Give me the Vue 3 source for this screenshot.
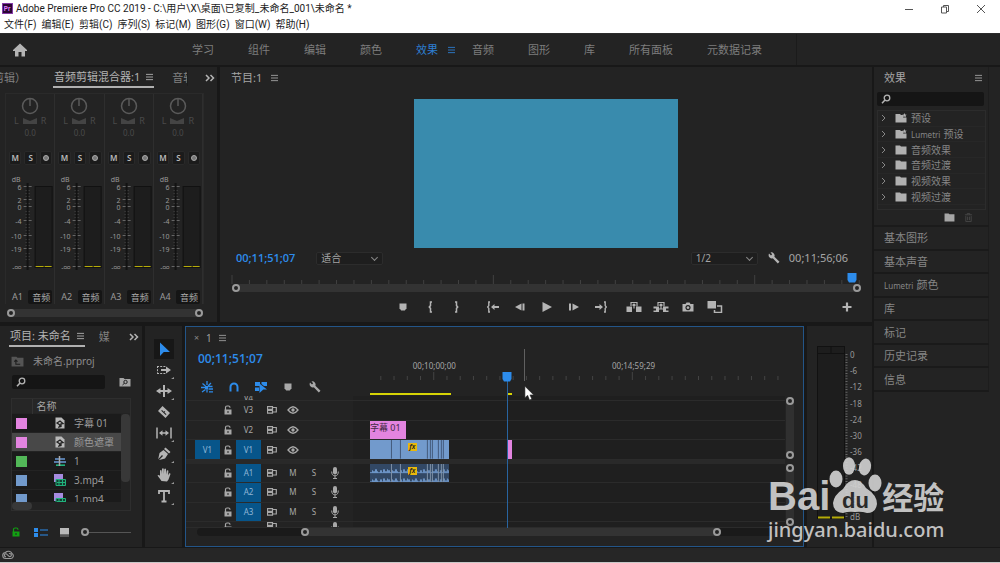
<script setup>
const menus = ['文件(F)', '编辑(E)', '剪辑(C)', '序列(S)', '标记(M)', '图形(G)', '窗口(W)', '帮助(H)']
const workspaces = ['学习', '组件', '编辑', '颜色', '效果', '音频', '图形', '库', '所有面板', '元数据记录']
const channels = ['A1', 'A2', 'A3', 'A4']
const dbMarks = [
  { t: '6', y: 13 }, { t: '2', y: 26 }, { t: '0', y: 33 }, { t: '-4', y: 47 },
  { t: '-10', y: 62 }, { t: '-19', y: 75 }, { t: '-∞', y: 93 },
]
const minorDb = [16, 19, 22, 29, 37, 40, 43, 50, 53, 56, 59, 65, 68, 71, 79, 82, 85]
const transport = [
  { id: 'marker', label: '添加标记' }, { id: 'in', label: '标记入点' }, { id: 'out', label: '标记出点' },
  { id: 'goin', label: '转到入点' }, { id: 'back', label: '后退一帧' }, { id: 'play', label: '播放' },
  { id: 'fwd', label: '前进一帧' }, { id: 'goout', label: '转到出点' }, { id: 'lift', label: '提升' },
  { id: 'extract', label: '提取' }, { id: 'camera', label: '导出帧' }, { id: 'compare', label: '比较视图' },
]
const effects = [
  { name: '预设', star: true }, { latin: 'Lumetri', name: '预设', star: true }, { name: '音频效果' },
  { name: '音频过渡' }, { name: '视频效果' }, { name: '视频过渡' },
]
const sidePanels = [
  { name: '基本图形' }, { name: '基本声音' }, { latin: 'Lumetri', name: '颜色' }, { name: '库' },
  { name: '标记' }, { name: '历史记录' }, { name: '信息' },
]
const files = [
  { name: '字幕 01', color: 'pink', icon: 'still' },
  { name: '颜色遮罩', color: 'pink', icon: 'still', selected: true },
  { name: '1', color: 'green', icon: 'seq' },
  { name: '3.mp4', color: 'blue', icon: 'clip' },
  { name: '1.mp4', color: 'blue', icon: 'clip' },
]
const tools = [
  { id: 'select', label: '选择工具' }, { id: 'trackfwd', label: '向前选择轨道工具' }, { id: 'ripple', label: '波纹编辑工具' },
  { id: 'razor', label: '剃刀工具' }, { id: 'slip', label: '外滑工具' }, { id: 'pen', label: '钢笔工具' },
  { id: 'hand', label: '手形工具' }, { id: 'type', label: '文字工具' },
]
const timelineTools = [
  { id: 'nest', on: true, label: '嵌套' }, { id: 'magnet', on: true, label: '对齐' },
  { id: 'linked', on: true, label: '链接选择项' }, { id: 'marker', label: '添加标记' }, { id: 'wrench', label: '时间轴显示设置' },
]
const videoTracks = ['V3', 'V2', 'V1']
const audioTracks = ['A1', 'A2', 'A3']
const cuts = [21, 30, 57, 60, 62, 68, 71, 73]
const wave = Array.from({ length: 79 }, (_, i) => 1 + ((i * 7 + (i * i) % 5) % 4))
const meterMarks = ['0', '-6', '-12', '-18', '-24', '-30', '-36', '-42', '-48', '-54', 'dB']
</script>

<template>
  <div class="app">
    <svg class="defs" aria-hidden="true">
      <symbol id="menu" viewBox="0 0 8 8"><path d="M0 1h8M0 4h8M0 7h8" stroke="currentColor" /></symbol>
      <symbol id="more" viewBox="0 0 10 8"><path d="M1 1l3 3-3 3M5.500 1l3 3-3 3" fill="none" stroke="currentColor" stroke-width="1.500" /></symbol>
      <symbol id="home" viewBox="0 0 16 14"><path d="M8 .5L1 7v1h2v5.500h3.500V9h3v4.500H13V8h2V7z" fill="currentColor" /></symbol>
      <symbol id="search" viewBox="0 0 10 10"><circle cx="6" cy="4" r="2.800" fill="none" stroke="currentColor" stroke-width="1.300" /><path d="M4 6L1 9.300" stroke="currentColor" stroke-width="1.500" /></symbol>
      <symbol id="folder" viewBox="0 0 12 10"><path d="M.5.5h4.500l1 1h5.500v8H.5z" fill="currentColor" /></symbol>
      <symbol id="upfolder" viewBox="0 0 12 10"><path d="M.5.5h4.500l1 1h5.500v8H.5z" fill="currentColor" /><path d="M4.500 4v3.500H8.500M3 5.200L4.500 3.700 6 5.200" fill="none" stroke="#1d1d1d" /></symbol>
      <symbol id="starfolder" viewBox="0 0 12 10"><path d="M.5 1h4.500l1 1h2v2.500h3.500v5H.5z" fill="currentColor" /><path d="M9.500 0l.7 1.500 1.600.2-1.200 1.100.3 1.600-1.400-.8-1.400.8.3-1.600L7.200 1.700l1.600-.2z" fill="currentColor" /></symbol>
      <symbol id="trash" viewBox="0 0 10 10"><path d="M1 2h8M3.500 2V.7h3V2M2 3.500V9.500h6v-6M4 4v4M6 4v4" fill="none" stroke="currentColor" /></symbol>
      <symbol id="wrench" viewBox="0 0 12 12"><path d="M1 1.500L3 3.500 4.200 2.300 2.500.5A3.200 3.200 0 0 1 6.400 4.700L11.500 9.700 9.800 11.400 4.800 6.300A3.200 3.200 0 0 1 .7 2.500z" fill="currentColor" /></symbol>
      <symbol id="marker" viewBox="0 0 12 12"><path d="M2.500 2.500h7v4.800L7.800 9.500H4.200L2.500 7.300z" fill="currentColor" /></symbol>
      <symbol id="in" viewBox="0 0 12 12"><path d="M8 1H6.500v3.600L5.300 6l1.200 1.400V11H8" fill="none" stroke="currentColor" stroke-width="1.500" /></symbol>
      <symbol id="out" viewBox="0 0 12 12"><path d="M4 1h1.500v3.600L6.700 6 5.500 7.400V11H4" fill="none" stroke="currentColor" stroke-width="1.500" /></symbol>
      <symbol id="goin" viewBox="0 0 12 12"><path d="M3 1H1.800v3.600L.7 6l1.100 1.400V11H3" fill="none" stroke="currentColor" stroke-width="1.400" /><path d="M4 6l3.500-3v2H12v2H7.500v2z" fill="currentColor" /></symbol>
      <symbol id="goout" viewBox="0 0 12 12"><path d="M9 1h1.200v3.600L11.300 6l-1.100 1.400V11H9" fill="none" stroke="currentColor" stroke-width="1.400" /><path d="M8 6L4.500 3v2H0v2h4.500v2z" fill="currentColor" /></symbol>
      <symbol id="back" viewBox="0 0 12 12"><path d="M1 6l6.500-3.500v7zM8.500 2.500h2v7h-2z" fill="currentColor" /></symbol>
      <symbol id="fwd" viewBox="0 0 12 12"><path d="M11 6L4.500 2.500v7zM1 2.500h2v7H1z" fill="currentColor" /></symbol>
      <symbol id="play" viewBox="0 0 12 12"><path d="M1.500 1v10L11 6z" fill="currentColor" /></symbol>
      <symbol id="lift" viewBox="0 0 16 12"><path d="M.5 5.500H6v5.500H.5zM10 5.500h5.500v5.500H10z" fill="currentColor" /><path d="M5 5V1.500h6V5.500M8 3v4.500M6.500 4.500L8 3l1.500 1.500" fill="none" stroke="currentColor" stroke-width="1.200" /></symbol>
      <symbol id="extract" viewBox="0 0 16 12"><path d="M.5 5.500H6v5.500H.5V9.500H3v-2H.5zM15.500 5.500H10v5.500h5.500V9.500H13v-2h2.500z" fill="currentColor" /><path d="M5 5V1.500h6V5.500M8 3v5M6.500 4.500L8 3l1.500 1.500M6 8h4" fill="none" stroke="currentColor" stroke-width="1.200" /></symbol>
      <symbol id="camera" viewBox="0 0 12 12"><path fill-rule="evenodd" d="M.5 3h3l1-1.500h3l1 1.500h3v7.500H.5zM6 4a2.600 2.600 0 1 0 .01 0zM6 5.200a1.400 1.400 0 1 1-.01 0z" fill="currentColor" /></symbol>
      <symbol id="compare" viewBox="0 0 16 12"><path d="M.5 0h8.500v7.500H.5z" fill="currentColor" /><path d="M10 5h4.500v6.500H7.500V9" fill="none" stroke="currentColor" stroke-width="1.500" /></symbol>
      <symbol id="plus" viewBox="0 0 10 10"><path d="M5 .5v9M.5 5h9" stroke="currentColor" stroke-width="2.200" /></symbol>
      <symbol id="lock" viewBox="0 0 8 10"><path d="M1.500 5V2.500Q1.500 1 3 1h1.500Q6 1 6 2.800" fill="none" stroke="currentColor" stroke-width="1.200" /><path fill-rule="evenodd" d="M.5 4.500h7V9.500h-7zM3.500 6v2h1V6z" fill="currentColor" /></symbol>
      <symbol id="sync" viewBox="0 0 10 8"><path d="M.5.600h5v2.700h-5zM.5 4.500h5v2.700h-5zM6 1.500h3.300V6H6" fill="none" stroke="currentColor" stroke-width="1.200" /></symbol>
      <symbol id="eye" viewBox="0 0 12 8"><path d="M1 4Q6-2.500 11 4 6 10.500 1 4z" fill="none" stroke="currentColor" stroke-width="1.300" /><circle cx="6" cy="4" r="1.700" fill="currentColor" /></symbol>
      <symbol id="mic" viewBox="0 0 8 12"><rect x="2" y="0" width="4" height="7.500" rx="2" fill="currentColor" /><path d="M.7 4.500Q.7 8.800 4 8.800T7.300 4.500M4 9v2.500M2 11.500h4" fill="none" stroke="currentColor" /></symbol>
      <symbol id="nest" viewBox="0 0 12 12"><path d="M6 0v4M1.500 2.500l3 2.500M10 2l-3 3M0 6.500h4M7 5.500h4.500M4.500 8.500L1 11M6 7v4.500M7.500 8h4.500M8 10.800h4" stroke="currentColor" stroke-width="1.300" /><path d="M4 5h3v3H4z" fill="currentColor" /></symbol>
      <symbol id="magnet" viewBox="0 0 12 12"><path d="M2.500 10.500V6a3.500 3.500 0 0 1 7 0v4.500" fill="none" stroke="currentColor" stroke-width="2" /></symbol>
      <symbol id="linked" viewBox="0 0 12 12"><path d="M0 1h5v4H0zM6.500 1H12v4H9L6.500 3zM0 6.500h4V10H0z" fill="currentColor" /><path d="M4.500 2.500L12 8.500H8.300L4.500 12z" fill="currentColor" /></symbol>
      <symbol id="select" viewBox="0 0 16 16"><path d="M4 1.500v13.500l3.800-4H14z" fill="currentColor" /></symbol>
      <symbol id="trackfwd" viewBox="0 0 16 16"><path d="M1 4.500h9M1 11.500h9M1.500 4v8" fill="none" stroke="currentColor" stroke-dasharray="2 1.200" /><path d="M5 7h5V4.500L15 8l-5 3.500V9H5z" fill="currentColor" /></symbol>
      <symbol id="ripple" viewBox="0 0 16 16"><path d="M7 2h2v12H7zM0 8l4.500-3v2H7v2H4.500v2zM16 8l-4.500-3v2H9v2h2.500v2z" fill="currentColor" /></symbol>
      <symbol id="razor" viewBox="0 0 16 16"><path fill-rule="evenodd" d="M6.500 2L14 9l-4.500 5L2 7zM6 6l-.8.800 4.500 4.200.8-.8-2-1.800.8-.8-.7-.7-.8.800z" fill="currentColor" /></symbol>
      <symbol id="slip" viewBox="0 0 16 16"><path d="M1 2.500v11M15 2.500v11" stroke="currentColor" stroke-width="1.500" /><path d="M3 8l3.500-2.700v2h3v-2L13 8l-3.500 2.700v-2h-3v2z" fill="currentColor" /></symbol>
      <symbol id="pen" viewBox="0 0 16 16"><path d="M9.500 1.500L14.500 6 13 7.500 8 3zM7.500 4L12 8 9 12.500 3 14 7 10 6 9 2.200 13.200 3.500 7z" fill="currentColor" /></symbol>
      <symbol id="hand" viewBox="0 0 16 16"><path d="M5.500 14L1.500 8.500q1-1.200 2.500.3V3.500q.8-1 1.600 0L6 7V1.800q.9-1 1.800 0V7l.5-5q.9-.9 1.700 0V7.500L10.800 3.500q1-.8 1.600.2L12 8.500l1.200-2.200q1.200-.3 1.300.7L12.500 12.500 11 14.500z" fill="currentColor" /></symbol>
      <symbol id="type" viewBox="0 0 16 16"><path d="M3 6V3h10v3M8 3v10.500M5.500 13.500h5" fill="none" stroke="currentColor" stroke-width="1.800" /></symbol>
      <symbol id="still" viewBox="0 0 12 12"><path d="M1.500.5h6L10.500 3.500v8h-9z" fill="#b9b9b9" /><path d="M3 6l3-2 3 2.500-2 .3v2.700L5 10l1-2z" fill="none" stroke="#222" stroke-width="1.300" /></symbol>
      <symbol id="seq" viewBox="0 0 12 12"><path d="M1 4h10M0 7h12" stroke="#6b9bd8" stroke-width="1.600" /><path d="M2 10.200h9" stroke="#20b27c" stroke-width="1.600" /><path d="M5.500 1v10" stroke="#aaa" stroke-width="1.500" /></symbol>
      <symbol id="clip" viewBox="0 0 12 12"><path d="M0 0h9v8H0z" fill="#a68be0" /><path d="M2 5.500h9.500v6H2z" fill="#143c30" stroke="#20b27c" /><path d="M3 8.500h8M5 6v5M8.500 6v5" stroke="#20b27c" /></symbol>
    </svg>

    <header class="titlebar">
      <div class="title">
        <svg class="logo" viewBox="0 0 12 12"><rect width="12" height="12" fill="#2a0634" /><rect x=".5" y=".5" width="11" height="11" fill="none" stroke="#8c3fb0" /><text x="2" y="9" font-size="7" font-weight="700" fill="#e07cff">Pr</text></svg>
        <span>Adobe Premiere Pro CC 2019 - C:\用户\X\桌面\已复制_未命名_001\未命名 *</span>
        <div class="win">
          <button aria-label="最小化"><svg viewBox="0 0 10 10"><path d="M1 5.500h8" stroke="#555" /></svg></button>
          <button aria-label="还原"><svg viewBox="0 0 10 10"><path d="M1.500 3h5v6h-5zM3.500 3V1.500h5v6h-2" fill="none" stroke="#555" /></svg></button>
          <button aria-label="关闭"><svg viewBox="0 0 10 10"><path d="M1 1l8 8M9 1L1 9" stroke="#555" /></svg></button>
        </div>
      </div>
      <nav class="menus"><button v-for="m in menus" :key="m">{{ m }}</button></nav>
    </header>

    <nav class="workspaces">
      <button class="home" aria-label="主页"><svg><use href="#home" /></svg></button>
      <div class="tabs">
        <button v-for="w in workspaces" :key="w" :class="{ active: w === '效果' }">{{ w }}<svg v-if="w === '效果'" class="burger"><use href="#menu" /></svg></button>
      </div>
      <i class="edge"></i>
    </nav>

    <main class="main">
      <div class="work">
        <div class="row upper">
          <section class="panel mixer">
            <div class="tabrow">
              <span class="cutleft">（剪辑）</span>
              <h2 class="current">音频剪辑混合器:1<svg class="burger"><use href="#menu" /></svg></h2>
              <span class="cutright">音轨</span>
              <svg class="more"><use href="#more" /></svg>
            </div>
            <div class="strips">
              <div v-for="c in channels" :key="c" class="strip">
                <svg class="knob" viewBox="0 0 18 18"><circle cx="9" cy="9" r="7.500" /><path d="M9 2v7" /></svg>
                <div class="pan"><span>L</span><svg viewBox="0 0 14 6"><path d="M0 0l7 3 7-3v6H0z" /></svg><span>R</span></div>
                <div class="panval">0.0</div>
                <div class="mso"><button>M</button><button>S</button><button aria-label="写关键帧"><svg viewBox="0 0 8 8"><circle cx="4" cy="4" r="2.500" fill="#777" stroke="#aaa" /></svg></button></div>
                <svg class="fader" viewBox="0 0 47 104">
                  <text x="14" y="8" text-anchor="end">dB</text>
                  <g v-for="d in dbMarks" :key="d.t"><text x="15" :y="d.y + 3" text-anchor="end">{{ d.t }}</text><path :d="`M17 ${d.y - .5}h8`" stroke="#666" /></g>
                  <path v-for="y in minorDb" :key="y" :d="`M19 ${y}.500h4`" stroke="#484848" />
                  <rect x="20" y="9" width="2" height="87" fill="#121212" />
                  <rect x="28.500" y="12.500" width="17" height="81" fill="#1d1d1d" stroke="#111" />
                  <path d="M29 92.500h8M38 92.500h7" stroke="#b5ab08" />
                </svg>
                <div class="chan"><span>{{ c }}</span><input :aria-label="c" value="音频"></div>
              </div>
            </div>
            <div class="hbar"><i></i><i></i></div>
          </section>

          <section class="panel program">
            <div class="tabrow"><h2>节目:1<svg class="burger"><use href="#menu" /></svg></h2></div>
            <div class="monitor"><div class="frame"></div></div>
            <div class="timerow">
              <span class="tc blue">00;11;51;07</span>
              <span class="pick"><select aria-label="缩放级别"><option>适合</option></select></span>
              <span class="pick right"><select aria-label="回放分辨率"><option>1/2</option></select></span>
              <button class="wrench" aria-label="设置"><svg><use href="#wrench" /></svg></button>
              <span class="tc">00;11;56;06</span>
            </div>
            <div class="pruler">
              <svg class="ticks"><line v-for="i in 37" :key="i" :x1="((i - 1) / 36.1 * 100) + '%'" :x2="((i - 1) / 36.1 * 100) + '%'" :y1="(i - 1) % 15 ? 5 : 0" y2="9" stroke="#414141" /></svg>
              <div class="hbar"><i></i><i></i></div>
              <svg class="head" viewBox="0 0 10 10"><path d="M.5 0h9v7L8 9.500H2L.5 7z" fill="#2d8ceb" /></svg>
            </div>
            <div class="transport">
              <div class="group"><button v-for="t in transport" :key="t.id" :class="t.id" :aria-label="t.label"><svg><use :href="'#' + t.id" /></svg></button></div>
              <button class="add" aria-label="按钮编辑器"><svg><use href="#plus" /></svg></button>
            </div>
          </section>
        </div>

        <div class="row lower">
          <section class="panel project">
            <div class="tabrow">
              <h2 class="current">项目: 未命名<svg class="burger"><use href="#menu" /></svg></h2>
              <span class="media">媒</span>
              <svg class="more"><use href="#more" /></svg>
            </div>
            <div class="path"><svg><use href="#upfolder" /></svg>未命名.prproj</div>
            <div class="find"><label class="search"><svg><use href="#search" /></svg><input aria-label="搜索项目"></label><button aria-label="新建搜索素材箱"><svg viewBox="0 0 12 10"><path d="M.5 1h4l1 1h6v7.500H.5z" fill="#a5a5a5" /><circle cx="6.500" cy="5" r="1.700" fill="none" stroke="#222" /><path d="M5.300 6.300L3.500 8" stroke="#222" /></svg></button></div>
            <div class="bin">
              <div class="clipbox">
                <table>
                  <colgroup><col class="swatchcol"><col class="iconcol"><col></colgroup>
                  <thead><tr><th></th><th class="namecol" colspan="2">名称</th></tr></thead>
                  <tbody>
                    <tr v-for="f in files" :key="f.name" :class="{ selected: f.selected }">
                      <td><i class="swatch" :class="f.color"></i></td>
                      <td><svg class="ficon"><use :href="'#' + f.icon" /></svg></td>
                      <td>{{ f.name }}</td>
                    </tr>
                  </tbody>
                </table>
                <div class="vthumb"></div>
              </div>
              <div class="hthumb"></div>
            </div>
            <div class="binfoot">
              <button class="green" aria-label="可写"><svg class="lk"><use href="#lock" /></svg></button>
              <button aria-label="列表视图"><svg class="lst" viewBox="0 0 14 9"><path d="M0 0h4v4H0zM0 5h4v4H0zM6 1.500h8v1H6zM6 6.500h8v1H6z" fill="#2d8ceb" /></svg></button>
              <button aria-label="图标视图"><svg class="icn" viewBox="0 0 9 9"><path d="M0 0h9v6.500H0z" fill="#b9b9b9" /><path d="M0 8h9" stroke="#888" /></svg></button>
              <input type="range" min="0" max="100" value="0" aria-label="缩略图大小">
            </div>
          </section>

          <section class="panel tools">
            <button v-for="(t, i) in tools" :key="t.id" :class="{ on: i === 0, sub: i > 0 && i !== 3 }" :aria-label="t.label"><svg><use :href="'#' + t.id" /></svg></button>
          </section>

          <section class="panel timeline">
            <div class="thead">
              <div class="tleft">
                <div class="seqname"><button aria-label="关闭序列">×</button><span>1</span><svg class="burger"><use href="#menu" /></svg></div>
                <div class="tc big blue">00;11;51;07</div>
                <div class="ttools"><button v-for="t in timelineTools" :key="t.id" :class="{ blue: t.on }" :aria-label="t.label"><svg><use :href="'#' + t.id" /></svg></button></div>
              </div>
              <div class="truler">
                <svg class="ticks">
                  <line v-for="i in 31" :key="i" :x1="(2.600 + (i - 1) * 3.190) + '%'" :x2="(2.600 + (i - 1) * 3.190) + '%'" :y1="i === 5 || i === 20 ? 45 : 49" y2="53" stroke="#444" />
                  <text x="15.500%" y="42" text-anchor="middle">00;10;00;00</text>
                  <text x="63.500%" y="42" text-anchor="middle">00;14;59;29</text>
                </svg>
              </div>
            </div>
            <div class="tbody">
              <div class="tracks">
                <div class="tgroup video">
                  <div class="track"><div class="thdr"><span></span><span></span><b>V4</b></div><div class="lane"></div></div>
                  <div v-for="t in videoTracks" :key="t" class="track">
                    <div class="thdr">
                      <button :class="{ src: t === 'V1' }" :aria-label="'源 ' + t">{{ t === 'V1' ? 'V1' : '' }}</button>
                      <button aria-label="锁定"><svg class="lk"><use href="#lock" /></svg></button>
                      <button :class="{ src: t === 'V1' }">{{ t }}</button>
                      <button aria-label="同步锁定"><svg class="sy"><use href="#sync" /></svg></button>
                      <button aria-label="切换轨道输出"><svg class="ey"><use href="#eye" /></svg></button>
                    </div>
                    <div class="lane">
                      <div v-if="t === 'V2'" class="clip title">字幕 01</div>
                      <div v-if="t === 'V1'" class="clip vid"><svg viewBox="0 0 79 19" preserveAspectRatio="none"><path v-for="c in cuts" :key="c" :d="`M${c}.500 0v19`" stroke="#43597a" /></svg><em>fx</em></div>
                      <div v-if="t === 'V1'" class="clip matte"></div>
                    </div>
                  </div>
                </div>
                <div class="split"></div>
                <div class="tgroup audio">
                  <div v-for="t in audioTracks" :key="t" class="track">
                    <div class="thdr">
                      <span></span>
                      <button aria-label="锁定"><svg class="lk"><use href="#lock" /></svg></button>
                      <button class="src">{{ t }}</button>
                      <button aria-label="同步锁定"><svg class="sy"><use href="#sync" /></svg></button>
                      <button>M</button><button>S</button>
                      <button aria-label="画外音录制"><svg class="mc"><use href="#mic" /></svg></button>
                    </div>
                    <div class="lane">
                      <div v-if="t === 'A1'" class="clip aud"><svg viewBox="0 0 79 19" preserveAspectRatio="none"><path v-for="(w, i) in wave" :key="i" :d="`M${i}.500 9.500v-${w}M${i}.500 19v-${w}`" stroke="#7099cc" /><path v-for="c in cuts" :key="'c' + c" :d="`M${c}.500 0v19`" stroke="#8193a8" /></svg><em>fx</em></div>
                    </div>
                  </div>
                  <div class="track last"><div class="thdr"><span></span><svg class="lk"><use href="#lock" /></svg><span></span><svg class="sy"><use href="#sync" /></svg><span></span><span></span><svg class="mc"><use href="#mic" /></svg></div><div class="lane"></div></div>
                </div>
                <div class="over">
                  <i class="render"></i><i class="render second"></i><i class="hover"></i><i class="playline"></i>
                  <svg class="head" viewBox="0 0 10 10"><path d="M.5 0h9v7L8 9.500H2L.5 7z" fill="#2d8ceb" /></svg>
                  <svg class="cursor" viewBox="0 0 12 16"><path d="M1 0v12.500l3-2.500 2 5 2.500-1-2-4.500h4z" fill="#fff" stroke="#222" stroke-width=".6" /></svg>
                </div>
              </div>
              <div class="vbars"><div class="vbar"><i></i><i></i></div><div class="vbar"><i></i><i></i></div></div>
            </div>
            <div class="hscroll"><div class="hbar"><i></i><i></i></div></div>
          </section>

          <section class="panel meters">
            <svg viewBox="0 0 48 200">
              <rect x=".5" y=".5" width="27" height="172" fill="#1d1d1d" stroke="#111" />
              <path d="M0 7.500h28M14 0v7" stroke="#111" />
              <path d="M1 171.500h12M15 171.500h12" stroke="#b5ab08" stroke-width="2" />
              <path d="M29.500 8v164" stroke="#666" stroke-dasharray="1 1.700" stroke-width="2" />
              <text v-for="(m, i) in meterMarks" :key="m" x="33" :y="12 + i * 16.200">{{ m }}</text>
            </svg>
          </section>
        </div>
      </div>

      <aside class="side">
        <section class="fx">
          <div class="fxhead"><h2>效果</h2><svg class="burger"><use href="#menu" /></svg></div>
          <label class="search"><svg><use href="#search" /></svg><input aria-label="搜索效果"></label>
          <ul>
            <li v-for="(e, i) in effects" :key="i"><svg class="chev" viewBox="0 0 6 8"><path d="M1 1l3 3-3 3" fill="none" stroke="#888" /></svg><svg class="fold"><use :href="e.star ? '#starfolder' : '#folder'" /></svg><small v-if="e.latin">{{ e.latin }}</small>{{ e.name }}</li>
          </ul>
          <div class="fxfoot"><button aria-label="新建自定义素材箱"><svg><use href="#folder" /></svg></button><button class="dim" aria-label="删除"><svg><use href="#trash" /></svg></button></div>
        </section>
        <div class="stack"><button v-for="s in sidePanels" :key="s.name"><small v-if="s.latin">{{ s.latin }}</small>{{ s.name }}</button></div>
      </aside>
    </main>

    <footer class="status"><svg viewBox="0 0 12 10"><path d="M4 8.500a3 3 0 0 1-.5-6 4 4 0 0 1 6.500 1 2.700 2.700 0 0 1-1 5zM4 6.800a1.500 1.500 0 1 1 1-2.500l2 2a1.500 1.500 0 1 0 0-2.500" fill="none" stroke="#999" stroke-width="1.100" /></svg></footer>

    <div class="mark" aria-hidden="true">
      <div class="brand">
        <span class="bai">Bai</span>
        <svg class="paw" viewBox="0 0 54 58"><g fill="#d3d3d3"><ellipse cx="8" cy="22" rx="6.500" ry="8.500" /><ellipse cx="21" cy="9" rx="6" ry="8.700" /><ellipse cx="37" cy="10" rx="6" ry="8.500" transform="rotate(12 37 10)" /><ellipse cx="47" cy="26" rx="6.500" ry="8.500" /><path d="M27 23Q33 23 38 31 49 38 49 47 48 56 39 56 33 54 27 55 21 54 15 56 5 55 5 46 6 38 15 32 20 23 27 23z" /></g><text x="14" y="51" font-size="22" font-weight="700" fill="#2c2c2c">du</text></svg>
        <span class="jy">经验</span>
      </div>
      <div class="url">jingyan.baidu.com</div>
    </div>
  </div>
</template>

<style>
html, body { background: #181818; }
</style>

<style scoped>
.app { position: relative; display: flex; flex-direction: column; min-height: 100vh; background: #181818; color: #a0a0a0; font: 11px/16px "Noto Sans", "Noto Sans CJK SC", sans-serif; overflow: hidden; }
.app *, .app *::before { box-sizing: border-box; }
.defs { position: absolute; width: 0; height: 0; }
button { display: flex; align-items: center; justify-content: center; padding: 0; border: 0; background: none; color: inherit; font: inherit; }
svg { display: block; flex: none; }
h2 { margin: 0; font: inherit; }
small { margin-right: 3px; padding-top: 1px; font-size: 8px; }
input { min-width: 0; border: 0; padding: 0; background: none; color: inherit; font: inherit; outline: 0; }

.titlebar { height: 33px; background: #fff; color: #1c1c1c; font-family: Roboto, "Noto Sans CJK SC", sans-serif; font-size: 10px; }
.title { display: flex; align-items: center; height: 17px; padding-left: 2px; }
.logo { width: 11px; height: 11px; margin-right: 3px; }
.win { display: flex; gap: 26px; margin-left: auto; padding-right: 14px; }
.win svg { width: 10px; height: 10px; }
.menus { display: flex; gap: 5px; height: 16px; padding-left: 4px; }

.workspaces { position: relative; display: flex; align-items: center; height: 32px; background: #232323; color: #7d7d7d; border-top: 1px solid #2c2c2c; }
.home { width: 40px; color: #b4b4b4; }
.home svg { width: 16px; height: 14px; }
.tabs { display: flex; gap: 34px; margin-left: 152px; }
.active { position: relative; color: #2d7fd3; }
.active .burger { position: absolute; left: 32px; }
.edge { width: 1px; align-self: stretch; margin-left: 34px; background: #1b1b1b; }
.burger { width: 7px; height: 8px; }

.main { flex: 1; display: grid; grid-template-columns: 1fr 126px; gap: 2px; padding: 2px 0 1px; }
.work { display: grid; grid-template-rows: 255fr 221fr; gap: 4px; min-width: 0; }
.row { display: flex; gap: 3px; min-width: 0; min-height: 0; }
.panel { background: #232323; min-width: 0; }
.tabrow { display: flex; align-items: center; height: 22px; }
.tabrow .burger { margin-left: 9px; }
.tabrow h2 { display: flex; align-items: center; white-space: nowrap; }
.tabrow .current { color: #b4b4b4; height: 20px; border-bottom: 2px solid #b0b0b0; }
.tabrow .current .burger { margin-left: 6px; }
.more { width: 10px; height: 8px; color: #b4b4b4; margin-left: auto; }
.cutleft { display: flex; justify-content: flex-end; width: 26px; overflow: hidden; white-space: nowrap; color: #808080; }
.cutright { width: 16px; overflow: hidden; white-space: nowrap; color: #808080; border-right: 1px solid #1d1d1d; margin-left: 18px; }
.media { margin-left: 14px; color: #808080; }

.mixer { display: flex; flex-direction: column; width: 217px; }
.mixer .tabrow { padding-right: 2px; }
.mixer .current { margin-left: 27px; padding: 0 1px; }
.strips { display: grid; grid-template-columns: repeat(4, 1fr); margin: 4px 13px 0 5px; border: 1px solid #2a2a2a; border-bottom: 0; }
.strip { border-right: 1px solid #2e2e2e; color: #4a4a4a; font-size: 8px; line-height: 12px; }
.knob { width: 18px; height: 18px; margin: 3px auto 0; fill: none; stroke: #5a5a5a; stroke-width: 1.5; }
.pan { display: flex; align-items: center; justify-content: center; gap: 4px; height: 12px; font-size: 9px; }
.pan svg { width: 14px; height: 6px; fill: #444; }
.panval { text-align: center; height: 14px; }
.mso { display: flex; gap: 3px; margin: 10px 2px 0 3px; }
.mso button { flex: 1; height: 14px; background: #1b1b1b; border: 1px solid #292929; border-radius: 2px; color: #bbb; font-weight: 600; }
.mso svg { width: 8px; height: 8px; }
.fader { width: 100%; height: 104px; margin-top: 9px; }
.fader text { font-size: 7px; fill: #999; }
.chan { display: flex; align-items: center; justify-content: space-between; gap: 4px; margin: 12px 2px 0 6px; color: #9a9a9a; font-size: 9px; height: 14px; }
.chan input { width: 24px; height: 14px; padding-left: 4px; background: #151515; border-radius: 2px; color: #aaa; }
.hbar { display: flex; align-items: center; justify-content: space-between; height: 8px; background: #333; border-radius: 4px; }
.hbar i, .vbar i { width: 8px; height: 8px; border: 2px solid #9a9a9a; border-radius: 50%; background: #232323; flex: none; }
.mixer .hbar { margin: 5px 14px 0 7px; }

.program { flex: 1; display: flex; flex-direction: column; }
.program .tabrow { padding-left: 11px; color: #a5a5a5; }
.monitor { flex: 1; display: flex; justify-content: center; margin-top: 10px; min-height: 140px; }
.frame { height: 100%; aspect-ratio: 264 / 149; background: #398bad; }
.timerow { display: flex; align-items: center; height: 20px; padding: 0 24px 0 16px; }
.tc { color: #a5a5a5; white-space: nowrap; }
.blue, .tc.blue { color: #2d8ceb; }
.tc.blue { font-family: "Open Sans", "Noto Sans", sans-serif; font-weight: 600; }
.pick { position: relative; width: 67px; margin-left: 21px; }
.pick::after { content: ""; position: absolute; right: 6px; top: 3px; width: 4px; height: 4px; border: solid #888; border-width: 0 1px 1px 0; transform: rotate(45deg); }
.pick select { display: block; width: 100%; height: 13px; padding: 0 4px; appearance: none; background: #1e1e1e; border: 1px solid #2c2c2c; border-radius: 2px; color: #a5a5a5; font: 10px/11px "Noto Sans", "Noto Sans CJK SC", sans-serif; }
.pick.right { margin-left: auto; }
.wrench { margin: 0 9px 0 10px; color: #b4b4b4; }
.wrench svg { width: 12px; height: 12px; }
.pruler { position: relative; margin: 7px 11px 0 12px; }
.ticks { width: 100%; height: 9px; overflow: visible; }
.pruler .head { position: absolute; right: 4px; top: -2px; width: 10px; height: 10px; }
.transport { position: relative; display: flex; align-items: center; justify-content: center; height: 30px; padding-left: 26px; color: #b4b4b4; }
.group { display: flex; }
.group button { width: 27px; }
.group svg { width: 12px; height: 12px; }
.group .lift svg, .group .extract svg, .group .compare svg { width: 16px; }
.group .out { margin-right: 9px; }
.group .goout { margin-right: 6px; }
.add { position: absolute; right: 20px; }
.add svg { width: 10px; height: 10px; }

.project { display: flex; flex-direction: column; width: 142px; padding-left: 9px; }
.project .tabrow { padding-right: 3px; flex: none; }
.project .current { padding: 0 1px; }
.path { display: flex; align-items: center; gap: 9px; height: 26px; padding-left: 2px; font-size: 10px; color: #8c8c8c; }
.path svg { width: 13px; height: 11px; color: #555; }
.find { display: flex; align-items: center; justify-content: space-between; margin: 0 11px 0 3px; height: 15px; }
.search { display: flex; align-items: center; height: 14px; padding-left: 4px; background: #151515; border-radius: 2px; color: #b4b4b4; }
.search svg { width: 10px; height: 10px; }
.search input { width: 100%; }
.find .search { width: 93px; }
.find button svg { width: 12px; height: 10px; }
.bin { margin: 9px 11px 0 2px; border: 1px solid #2e2e2e; }
.clipbox { position: relative; height: 103px; overflow: hidden; background: #1b1b1b; }
table { width: 100%; border-collapse: collapse; table-layout: fixed; line-height: 14px; font-size: 10px; }
th { height: 14px; padding: 0; background: #262626; font-weight: 400; text-align: left; color: #a5a5a5; }
.namecol { padding-left: 4px; border-left: 1px solid #333; }
tr { height: 19px; border-bottom: 1px solid #232323; }
thead tr { height: 14px; }
td { padding: 0; color: #9a9a9a; white-space: nowrap; }
.swatchcol { width: 20px; }
.iconcol { width: 42px; }
.ficon { width: 12px; height: 12px; margin-left: 22px; }
.swatch { display: block; width: 11px; height: 11px; margin-left: 4px; }
.pink { background: #e384e0; }
.green.swatch { background: #52b858; }
.swatch.blue { background: #729acc; }
.selected { background: #484848; }
.vthumb { position: absolute; right: 0; top: 15px; width: 9px; height: 88px; background: #232323; }
.vthumb::before { content: ""; display: block; height: 68px; border-radius: 4px; background: #383838; }
.hthumb { width: 20px; height: 8px; border-radius: 4px; background: #383838; }
.binfoot { display: flex; align-items: center; margin-top: 16px; padding-left: 3px; }
.binfoot .green { color: #12a012; margin-right: 14px; }
.lk { width: 8px; height: 10px; }
.lst { width: 14px; height: 9px; margin-right: 12px; }
.icn { width: 9px; height: 9px; margin-right: 12px; }
.binfoot input { width: 50px; height: 10px; margin: 0; appearance: none; }
.binfoot input::-webkit-slider-runnable-track { height: 8px; background: linear-gradient(#555, #555) center / 100% 1px no-repeat; }
.binfoot input::-webkit-slider-thumb { appearance: none; width: 8px; height: 8px; border: 2px solid #9a9a9a; border-radius: 50%; background: #232323; }

.tools { display: flex; flex-direction: column; align-items: center; gap: 1px; width: 37px; padding-top: 13px; color: #b4b4b4; }
.tools button { position: relative; width: 20px; height: 20px; }
.tools svg { width: 16px; height: 16px; }
.tools .on { background: #171717; color: #2d8ceb; }
.tools .sub::after { content: ""; position: absolute; right: 0; bottom: 1px; border: solid transparent; border-width: 3px 0 0 3px; border-right: 0; width: 0; height: 0; border-bottom: 2px solid #999; border-top: 0; }

.timeline { flex: 1; display: flex; flex-direction: column; border: 1px solid #235588; }
.thead { display: flex; height: 69px; }
.tleft { width: 184px; flex: none; }
.seqname { display: flex; align-items: center; gap: 7px; height: 21px; padding-left: 8px; font-size: 10px; color: #a0a0a0; }
.seqname button { width: 5px; font-size: 9px; color: #888; }
.big { height: 22px; padding-left: 12px; font-size: 12px; line-height: 22px; }
.ttools { display: flex; gap: 15px; height: 34px; align-items: center; padding-left: 15px; color: #a8a8a8; }
.ttools svg { width: 12px; height: 12px; }
.truler { flex: 1; margin-right: 18px; }
.truler .ticks { height: 53px; }
.truler text { font-size: 8px; fill: #a5a5a5; }
.tbody { display: flex; height: 132px; }
.tracks { position: relative; flex: 1; }
.tgroup { display: grid; overflow: hidden; }
.video { height: 64px; grid-template-rows: 5px repeat(3, 1fr); }
.audio { height: 64px; grid-template-rows: repeat(3, 1fr) 6px; }
.split { height: 4px; background: #292929; }
.track { display: flex; min-height: 0; border-bottom: 1px solid #2b2b2b; overflow: hidden; }
.thdr { display: grid; grid-template-columns: 25px 16px 25px 22px 20px 22px 20px; width: 184px; flex: none; padding-left: 9px; font-size: 8px; color: #a8a8a8; background: linear-gradient(90deg, #232323 167px, #202020 167px); }
.thdr b { font-weight: 400; line-height: 4px; text-align: center; }
.thdr > svg { margin: 0 auto; }
.thdr .src { background: #07558a; color: #8fb6d6; }
.sy { width: 10px; height: 8px; }
.ey { width: 12px; height: 8px; }
.mc { width: 8px; height: 12px; }
.lane { position: relative; flex: 1; background: #1f1f1f; }
.clip { position: absolute; inset: 0 auto 0 0; overflow: hidden; }
.clip svg { width: 100%; height: 100%; }
.clip em { position: absolute; left: 48%; top: 3px; width: 9px; height: 8px; background: #eab80c; color: #222; font: italic 600 7px/8px "Noto Sans", sans-serif; text-align: center; }
.title.clip { display: block; width: 8.7%; height: auto; padding: 0; background: #e384e0; color: #452a44; font-size: 9px; line-height: 14px; white-space: nowrap; }
.vid { width: 19%; background: #729acc; }
.aud { width: 19%; background: #324865; }
.matte { left: 33.2%; width: 4px; background: #e384e0; }
.over { position: absolute; left: 184px; right: 0; top: 0; bottom: 0; }
.over > * { position: absolute; }
.render { left: 0; top: -3px; width: 19.5%; height: 2px; background: #d6d305; }
.render.second { left: 33.2%; width: 4px; }
.hover { left: 37.1%; top: -47px; width: 1px; height: 32px; background: #606060; }
.playline { left: 33%; top: -15px; bottom: 0; width: 1px; background: #2864a0; }
.over .head { left: calc(33% - 5px); top: -24px; width: 10px; height: 10px; }
.cursor { left: 37%; top: -10px; width: 11px; height: 15px; }
.vbars { display: flex; flex-direction: column; gap: 5px; width: 18px; flex: none; padding: 1px 0 2px 1px; }
.vbar { flex: 1; display: flex; flex-direction: column; align-items: center; justify-content: space-between; width: 8px; border-radius: 4px; background: #303030; }
.hscroll { margin: 0 30px 0 11px; background: #1a1a1a; border-radius: 4px; }
.hscroll .hbar { width: 73%; margin-left: 18%; }

.meters { width: 65px; padding: 20px 0 0 10px; }
.meters svg { width: 48px; height: 200px; }
.meters text { font-size: 8px; fill: #999; }

.side { background: #232323; padding-right: 11px; }
.fx { height: 158px; padding: 0 0 0 3px; border-right: 1px solid #1d1d1d; }
.fxhead { display: flex; align-items: center; justify-content: space-between; height: 22px; padding: 0 6px 0 7px; color: #a5a5a5; }
.fx .search { margin: 3px 4px 4px 0; }
.fx ul { display: grid; grid-template-rows: repeat(6, 1fr); height: 100px; margin: 0 2px 0 0; padding: 0 0 4px; border: 1px solid #2c2c2c; list-style: none; color: #868686; }
.fx li { display: flex; align-items: center; min-height: 0; border-bottom: 1px solid #272727; white-space: nowrap; font-size: 10px; }
.chev { width: 6px; height: 8px; margin: 0 8px 0 3px; }
.fold { width: 12px; height: 10px; margin-right: 4px; color: #b0b0b0; }
.fxfoot { display: flex; justify-content: flex-end; gap: 8px; margin-top: 3px; padding-right: 14px; color: #a5a5a5; }
.fxfoot svg { width: 11px; height: 9px; }
.dim { color: #484848; }
.stack { display: grid; grid-template-rows: repeat(7, 1fr); height: 167px; border-top: 2px solid #1b1b1b; }
.stack button { justify-content: flex-start; padding: 1px 0 0 10px; border-bottom: 2px solid #1a1a1a; border-right: 1px solid #1d1d1d; color: #868686; }

.status { height: 15px; background: #262626; border-bottom: 1px solid #c8c8c8; padding: 2px; }
.status svg { width: 12px; height: 10px; }

.mark { position: absolute; right: 54px; bottom: 20px; width: 178px; color: #d3d3d3; opacity: 0.9; pointer-events: none; }
.brand { display: flex; align-items: flex-end; height: 60px; }
.bai { font: 700 40px/42px "Liberation Sans", sans-serif; }
.paw { width: 54px; height: 58px; margin: 0 0 2px -2px; }
.paw text { font-family: "Liberation Sans", sans-serif; }
.jy { font: 700 31px/42px "Noto Sans CJK SC", sans-serif; white-space: nowrap; }
.url { font: 500 20px/26px "Noto Sans", sans-serif; white-space: nowrap; }
</style>
